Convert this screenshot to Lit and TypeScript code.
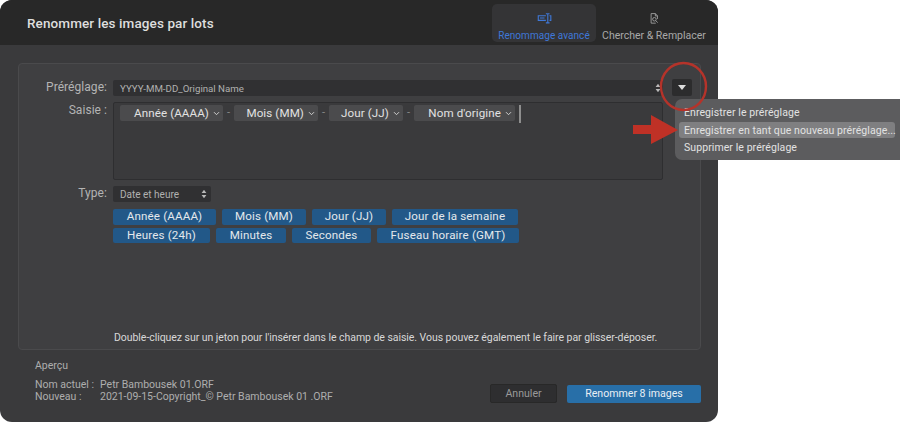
import { LitElement, html, css, svg } from "lit";
import { customElement } from "lit/decorators.js";

const chevron = svg`<svg class="chev" width="7" height="5" viewBox="0 0 7 5"><path d="M1 1.2 3.5 3.7 6 1.2" fill="none" stroke="#d0d0d0" stroke-width="1"/></svg>`;
const updown = svg`<svg class="updown" width="6" height="10" viewBox="0 0 6 10"><path d="M3 .8 5.4 4H.6zM3 9.2 .6 6h4.8z" fill="#b8b8b8"/></svg>`;

@customElement("app-root")
export class AppRoot extends LitElement {
  static styles = css`
    :host { display: block; width: 900px; height: 422px; background: #fff; position: relative; overflow: hidden;
      font-family: Roboto, "Liberation Sans", sans-serif; color: #d8d8d8; font-size: 10.5px; }
    .win { width: 718px; height: 422px; background: #3a3a3c; border-radius: 12px; overflow: hidden; display: flex; flex-direction: column; box-sizing: border-box; }
    .top { height: 45px; flex: none; background: #282828; display: flex; justify-content: space-between; box-sizing: border-box; padding: 4px 8px 3px 27px; }
    .title { font-size: 13.5px; font-weight: 500; color: #dedede; margin-top: 11px; line-height: 16px; letter-spacing: 0.1px; }
    .tabs { display: flex; gap: 4px; }
    .tab { width: 104px; height: 38px; border-radius: 5px; display: flex; flex-direction: column; align-items: center; padding-top: 9px; box-sizing: border-box; color: #a8a8a8; line-height: 12px; white-space: nowrap; gap: 6px; }
    .tab.on { background: #343436; color: #3f78d8; font-size: 10px; letter-spacing: 0.05px; }
    .tab.off { width: 110px; font-size: 10.5px; padding-right: 2px; }
    .panel { margin: 18px 17px 0 18px; height: 287px; flex: none; box-sizing: border-box; border: 1px solid #4a4a4c; border-radius: 4px; background: #3f3f41; padding: 16px 37px 0 0; display: grid; grid-template-columns: 94px 550px; column-gap: 0; grid-template-rows: 16px 78px 16px auto 1fr; row-gap: 6px; position: relative; }
    .lbl { text-align: right; font-size: 12px; letter-spacing: 0.05px; color: #b4b4b4; line-height: 15px; padding-right: 6px; box-sizing: border-box; }
    .lbl.saisie { padding-top: 1px; }
    .sel { background: #303032; border-radius: 2px; display: flex; align-items: center; justify-content: space-between; padding: 0 2px 0 7px; color: #b0b0b0; font-size: 9.7px; box-sizing: border-box; }
    .input { background: #3a3a3c; border: 1px solid #2e2e30; box-sizing: border-box; border-radius: 2px; padding: 2px 0 0 6px; display: flex; align-items: flex-start; gap: 4px; color: #8a8a8a; font-size: 11px; }
    .tok { height: 16px; background: #4b4b4d; border-radius: 2px; color: #e2e2e2; font-size: 11.6px; letter-spacing: 0.1px; line-height: 16px; display: flex; align-items: center; justify-content: flex-end; padding-right: 3px; box-sizing: border-box; gap: 4px; white-space: nowrap; }
    .dash { line-height: 16px; width: 3px; }
    .cursor { width: 2px; height: 18px; background: #8e8e8e; flex: none; }
    .type { width: 98px; padding-right: 4px; font-size: 10px; }
    .chips { grid-column: 2; display: flex; flex-direction: column; gap: 3px; margin-top: 1px; }
    .row { display: flex; gap: 6px; }
    .chip { height: 15.5px; background: #225888; color: #e4e8ec; font-size: 11.6px; letter-spacing: 0.15px; line-height: 15.5px; border-radius: 2px; text-align: center; white-space: nowrap; }
    .hint { grid-column: 1 / 3; align-self: end; margin: 0 0 4px 95px; color: #d8d8d8; font-size: 10.5px; letter-spacing: -0.05px; line-height: 14px; white-space: nowrap; }
    .foot { flex: 1; position: relative; display: flex; justify-content: space-between; padding: 10px 17px 0 35px; color: #aeaeae; font-size: 10.5px; line-height: 12px; }
    .meta { display: grid; grid-template-columns: 65px auto; grid-template-rows: 19px 12px 12px; align-content: start; }
    .preview { grid-column: 1 / 3; }
    .btns { display: flex; gap: 10px; margin-top: 25px; align-items: flex-start; }
    .btn { height: 18px; border-radius: 2px; font-size: 10.6px; line-height: 18px; text-align: center; box-sizing: border-box; }
    .cancel { width: 67px; height: 19px; margin-top: -1px; background: #2e2e30; border: 1px solid #282828; color: #9a9a9a; }
    .go { width: 134px; background: #286fa8; color: #e8eef4; }
    .caret { position: absolute; left: 672px; top: 79px; width: 20px; height: 17px; background: #2c2c2d; border-radius: 2px; display: flex; align-items: center; justify-content: center; }
    .menu { position: absolute; left: 675px; top: 99px; width: 225px; height: 61px; background: #5c5c5e; border-radius: 7px 0 0 7px; padding-top: 6px; box-sizing: border-box; font-size: 10.5px; letter-spacing: 0.08px; color: #e2e2e2; }
    .mi { height: 17px; line-height: 16px; padding-left: 9px; white-space: nowrap; }
    .mi.sel2 { background: #7f7f81; border-radius: 3px; margin: 0 5px 2px 4px; padding-left: 5px; height: 16px; line-height: 17px; }
    .over { position: absolute; left: 0; top: 0; pointer-events: none; }
  `;

  render() {
    const chipRow = (items: [string, number][]) => html`<div class="row">${items.map(([t, w]) => html`<div class="chip" style="width:${w}px">${t}</div>`)}</div>`;
    const tok = (t: string, w: number) => html`<div class="tok" style="width:${w}px">${t}${chevron}</div>`;
    return html`
      <div class="win">
        <div class="top">
          <div class="title">Renommer les images par lots</div>
          <div class="tabs">
            <div class="tab on">
              <svg width="15" height="12" viewBox="0 0 15 12" fill="none" stroke="#3f78d8" stroke-width="1.2"><path d="M9 3H.7v5H9M13 3h1.4v5H13"/><path d="M2.5 5.5h5"/><path d="M9 .8h1.5c.4 0 .6.2.6.6v8.8c0 .4.2.6.6.6H13M13 .8h-1.3c-.4 0-.6.2-.6.6M11.1 10.2c0 .4-.2.6-.6.6H9"/></svg>
              <span>Renommage avancé</span>
            </div>
            <div class="tab off">
              <svg width="11" height="13" viewBox="0 0 11 13" fill="none" stroke="#a8a8a8" stroke-width="1"><path d="M7 12H1.5V.7h5L9 3.4V7"/><path d="M6.5.7v2.8H9"/><circle cx="5.4" cy="7.4" r="2.1"/><path d="M7 9l2.2 2.4"/></svg>
              <span>Chercher &amp; Remplacer</span>
            </div>
          </div>
        </div>
        <div class="panel">
          <div class="lbl">Préréglage:</div>
          <div class="sel"><span>YYYY-MM-DD_Original Name</span>${updown}</div>
          <div class="lbl saisie">Saisie :</div>
          <div class="input">
            ${tok("Année (AAAA)", 103)}<span class="dash">-</span>
            ${tok("Mois (MM)", 84)}<span class="dash">-</span>
            ${tok("Jour (JJ)", 74)}<span class="dash">-</span>
            ${tok("Nom d'origine", 101)}
            <div class="cursor"></div>
          </div>
          <div class="lbl">Type:</div>
          <div class="sel type"><span>Date et heure</span>${updown}</div>
          <div class="chips">
            ${chipRow([["Année (AAAA)", 103], ["Mois (MM)", 84], ["Jour (JJ)", 74], ["Jour de la semaine", 126]])}
            ${chipRow([["Heures (24h)", 97], ["Minutes", 70], ["Secondes", 79], ["Fuseau horaire (GMT)", 142]])}
          </div>
          <div class="hint">Double-cliquez sur un jeton pour l'insérer dans le champ de saisie. Vous pouvez également le faire par glisser-déposer.</div>
        </div>
        <div class="foot">
          <div class="meta">
            <div class="preview">Aperçu</div>
            <div>Nom actuel :</div><div>Petr Bambousek 01.ORF</div>
            <div>Nouveau :</div><div>2021-09-15-Copyright_© Petr Bambousek 01 .ORF</div>
          </div>
          <div class="btns">
            <div class="btn cancel">Annuler</div>
            <div class="btn go">Renommer 8 images</div>
          </div>
        </div>
      </div>
      <div class="caret"><svg width="8" height="5" viewBox="0 0 8 5"><path d="M0 0h8L4 5z" fill="#ddd"/></svg></div>
      <div class="menu">
        <div class="mi">Enregistrer le préréglage</div>
        <div class="mi sel2">Enregistrer en tant que nouveau préréglage...</div>
        <div class="mi">Supprimer le préréglage</div>
      </div>
      <svg class="over" width="900" height="422" viewBox="0 0 900 422">
        <ellipse cx="683.5" cy="86.5" rx="22.5" ry="23.5" fill="none" stroke="#b5332a" stroke-width="2.4"/>
        <path d="M633 125h18v-10l27 15-27 14v-10h-18z" fill="#bf3126"/>
      </svg>
    `;
  }
}
